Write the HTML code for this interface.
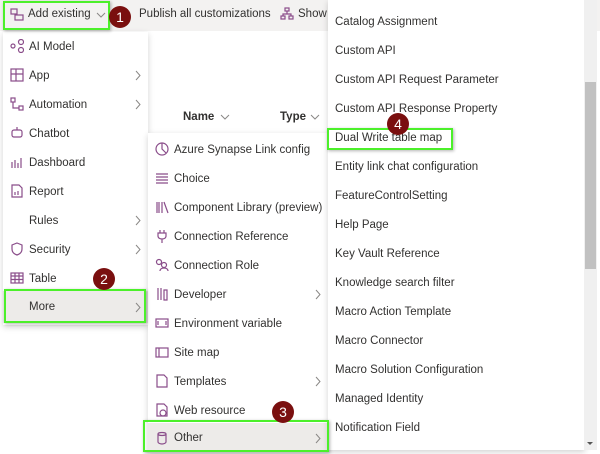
<!DOCTYPE html>
<html><head><meta charset="utf-8"><style>
*{margin:0;padding:0;box-sizing:border-box}
body{width:600px;height:450px;overflow:hidden;position:relative;background:#fff;font-family:"Liberation Sans",sans-serif;font-size:11.5px;color:#323130}
.abs{position:absolute}
.tb{left:0;top:0;width:600px;height:31px;background:#f3f2f1}
.menu{position:absolute;background:#fff;box-shadow:0 2px 6px rgba(0,0,0,.18)}
.it{position:absolute;left:0;right:0;height:29px;line-height:30px;white-space:nowrap}
.it .ic{position:absolute;left:7px;top:7px;width:14px;height:14px}
.ch{position:absolute;right:7px;top:9px;width:6px;height:11px}
.ch path{stroke:#8a8886;stroke-width:1}
.gb{position:absolute;border:2px solid #4cf02a;box-shadow:1px 1px 3px rgba(0,0,0,.3)}
.bd{position:absolute;width:22px;height:22px;border-radius:50%;background:#7a0f0f;color:#fff;font-size:14px;line-height:22px;text-align:center}
svg{stroke:#8a4d8a;fill:none;stroke-width:1.2}
.dn{stroke:#8a8886;stroke-width:1}
</style></head><body>
<div class="abs tb"></div>
<div class="abs" style="left:10px;top:8px;width:14px;height:13px"><svg width="14" height="13"><rect x="1" y="1" width="6" height="5"/><rect x="5" y="7" width="8" height="5"/></svg></div>
<div class="abs" style="left:28px;top:8px">Add existing</div>
<svg class="abs" style="left:96px;top:12px" width="10" height="6"><path class="dn" d="M1 1l4 4 4-4"/></svg>
<div class="abs" style="left:139px;top:8px">Publish all customizations</div>
<div class="abs" style="left:280px;top:7px"><svg width="14" height="13"><rect x="5" y="1" width="4" height="3"/><rect x="1" y="9" width="4" height="3"/><rect x="9" y="9" width="4" height="3"/><path d="M7 4v3M3 9V7h8v2"/></svg></div>
<div class="abs" style="left:298px;top:8px">Show</div>
<div class="abs" style="left:183px;top:111px;font-weight:bold">Name</div>
<svg class="abs" style="left:220px;top:114px" width="10" height="6"><path class="dn" d="M1 1l4 4 4-4"/></svg>
<div class="abs" style="left:280px;top:111px;font-weight:bold">Type</div>
<svg class="abs" style="left:310px;top:114px" width="10" height="6"><path class="dn" d="M1 1l4 4 4-4"/></svg>

<div class="menu" style="left:3px;top:32px;width:145px;height:293px">
<div class="it" style="top:0"><svg class="ic"><circle cx="3" cy="7" r="2"/><circle cx="11" cy="3" r="2.5"/><circle cx="11" cy="11" r="2.5"/></svg><span style="margin-left:26px">AI Model</span></div>
<div class="it" style="top:29px"><svg class="ic"><rect x="1" y="1" width="12" height="12"/><path d="M6 1v12M1 6h12"/></svg><span style="margin-left:26px">App</span><svg class="ch"><path d="M1 1l4 4.5-4 4.5"/></svg></div>
<div class="it" style="top:58px"><svg class="ic"><rect x="1" y="1" width="4" height="4"/><rect x="9" y="9" width="4" height="4"/><path d="M3 5v6h6"/></svg><span style="margin-left:26px">Automation</span><svg class="ch"><path d="M1 1l4 4.5-4 4.5"/></svg></div>
<div class="it" style="top:87px"><svg class="ic"><rect x="2" y="4" width="10" height="7" rx="2"/><path d="M7 1v3"/></svg><span style="margin-left:26px">Chatbot</span></div>
<div class="it" style="top:116px"><svg class="ic"><path d="M2 13V7M5 13V5M8 13V8M11 13V3"/></svg><span style="margin-left:26px">Dashboard</span></div>
<div class="it" style="top:145px"><svg class="ic"><path d="M2 1h7l3 3v9H2z"/><path d="M5 11V8M8 11V7"/></svg><span style="margin-left:26px">Report</span></div>
<div class="it" style="top:174px"><span style="margin-left:26px">Rules</span><svg class="ch"><path d="M1 1l4 4.5-4 4.5"/></svg></div>
<div class="it" style="top:203px"><svg class="ic"><path d="M7 1l5 2v4c0 3-2 5-5 6-3-1-5-3-5-6V3z"/></svg><span style="margin-left:26px">Security</span><svg class="ch"><path d="M1 1l4 4.5-4 4.5"/></svg></div>
<div class="it" style="top:232px"><svg class="ic"><rect x="1" y="2" width="12" height="10"/><path d="M1 5h12M1 8.5h12M5 2v10M9 2v10"/></svg><span style="margin-left:26px">Table</span></div>
<div class="it" style="top:259px;height:32px;line-height:33px;background:#edebe9"><span style="margin-left:26px">More</span><svg class="ch" style="top:11px"><path d="M1 1l4 4.5-4 4.5"/></svg></div>
</div>

<div class="menu" style="left:148px;top:133px;width:180px;height:320px">
<div class="it" style="top:2px"><svg class="ic"><circle cx="7" cy="7" r="6"/><path d="M7 1v6l4 4"/></svg><span style="margin-left:26px">Azure Synapse Link config</span></div>
<div class="it" style="top:31px"><svg class="ic"><path d="M1 3h12M1 6h12M1 9h12M1 12h12"/></svg><span style="margin-left:26px">Choice</span></div>
<div class="it" style="top:60px"><svg class="ic"><path d="M2 2v11M4 2v11M7 2v11M9 2l4 11"/></svg><span style="margin-left:26px">Component Library (preview)</span></div>
<div class="it" style="top:89px"><svg class="ic"><path d="M5 1v3M9 1v3M3 4h8v3c0 2-2 3-4 3s-4-1-4-3zM7 10v4"/></svg><span style="margin-left:26px">Connection Reference</span></div>
<div class="it" style="top:118px"><svg class="ic"><circle cx="4" cy="4" r="2.5"/><circle cx="9" cy="7" r="2.5"/><path d="M5 13c0-2 2-3 4-3s4 1 4 3"/></svg><span style="margin-left:26px">Connection Role</span></div>
<div class="it" style="top:147px"><svg class="ic"><path d="M3 1v12M6 1v12M9 3v10h3V3z"/></svg><span style="margin-left:26px">Developer</span><svg class="ch"><path d="M1 1l4 4.5-4 4.5"/></svg></div>
<div class="it" style="top:176px"><svg class="ic"><rect x="1" y="3" width="12" height="8"/><path d="M3 5v4M11 5v4"/></svg><span style="margin-left:26px">Environment variable</span></div>
<div class="it" style="top:205px"><svg class="ic"><rect x="1" y="3" width="12" height="9"/><path d="M4 3v9"/></svg><span style="margin-left:26px">Site map</span></div>
<div class="it" style="top:234px"><svg class="ic"><path d="M2 1h7l3 3v9H2z"/></svg><span style="margin-left:26px">Templates</span><svg class="ch"><path d="M1 1l4 4.5-4 4.5"/></svg></div>
<div class="it" style="top:263px"><svg class="ic"><path d="M2 1h7l3 3v9H2z"/><circle cx="8" cy="10" r="3"/></svg><span style="margin-left:26px">Web resource</span></div>
<div class="it" style="top:290px;height:30px;line-height:31px;background:#edebe9"><svg class="ic" style="top:8px"><ellipse cx="7" cy="3" rx="4" ry="1.5"/><path d="M3 3v8c0 1 2 2 4 2s4-1 4-2V3"/></svg><span style="margin-left:26px">Other</span><svg class="ch" style="top:10px"><path d="M1 1l4 4.5-4 4.5"/></svg></div>
</div>

<div class="menu" style="left:328px;top:0;width:257px;height:450px">
<div class="it" style="top:7px;left:7px">Catalog Assignment</div>
<div class="it" style="top:36px;left:7px">Custom API</div>
<div class="it" style="top:65px;left:7px">Custom API Request Parameter</div>
<div class="it" style="top:94px;left:7px">Custom API Response Property</div>
<div class="it" style="top:123px;left:7px">Dual Write table map</div>
<div class="it" style="top:152px;left:7px">Entity link chat configuration</div>
<div class="it" style="top:181px;left:7px">FeatureControlSetting</div>
<div class="it" style="top:210px;left:7px">Help Page</div>
<div class="it" style="top:239px;left:7px">Key Vault Reference</div>
<div class="it" style="top:268px;left:7px">Knowledge search filter</div>
<div class="it" style="top:297px;left:7px">Macro Action Template</div>
<div class="it" style="top:326px;left:7px">Macro Connector</div>
<div class="it" style="top:355px;left:7px">Macro Solution Configuration</div>
<div class="it" style="top:384px;left:7px">Managed Identity</div>
<div class="it" style="top:413px;left:7px">Notification Field</div>
</div>
<div class="abs" style="left:584px;top:0;width:13px;height:450px;background:#f0f0f0"></div>
<div class="abs" style="left:585px;top:82px;width:11px;height:187px;background:#c1c1c1"></div>
<div class="abs" style="left:587px;top:442px;width:0;height:0;border-left:3px solid transparent;border-right:3px solid transparent;border-top:3px solid #555"></div>

<div class="gb" style="left:3px;top:1px;width:107px;height:29px"></div>
<div class="gb" style="left:4px;top:289px;width:142px;height:34px"></div>
<div class="gb" style="left:143px;top:420px;width:186px;height:32px"></div>
<div class="gb" style="left:327px;top:128px;width:126px;height:22px"></div>
<div class="bd" style="left:109px;top:6px">1</div>
<div class="bd" style="left:93px;top:268px">2</div>
<div class="bd" style="left:272px;top:401px">3</div>
<div class="bd" style="left:387px;top:113px">4</div>
</body></html>
